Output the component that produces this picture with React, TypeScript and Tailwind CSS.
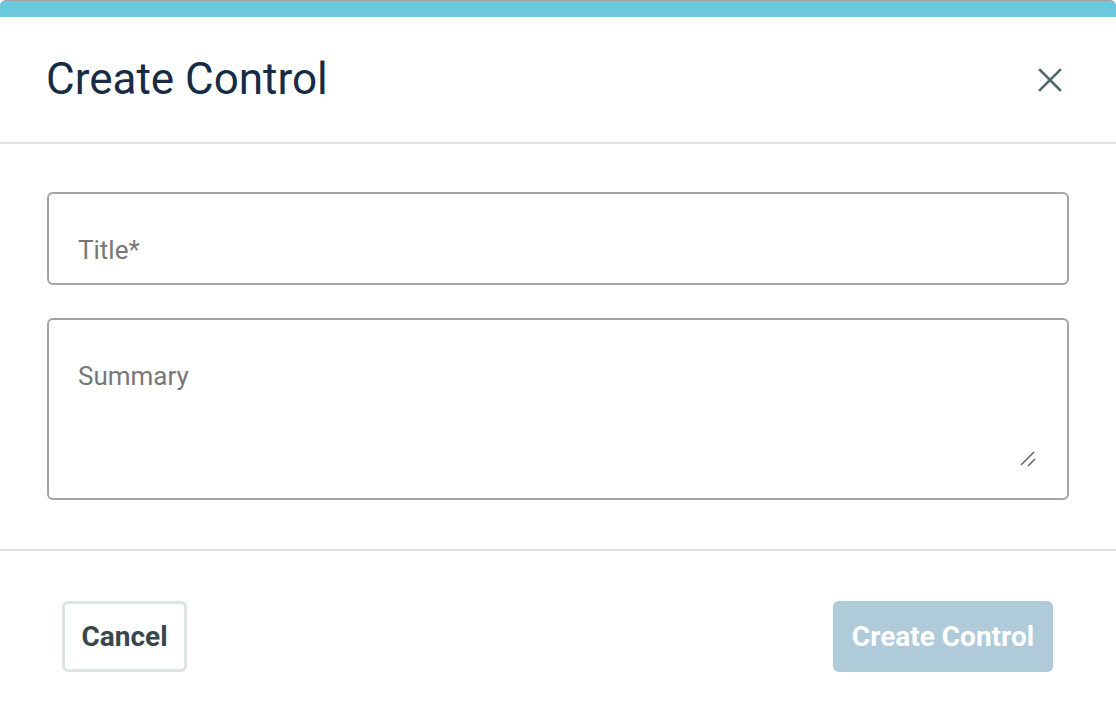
import React from "react";

export default function App() {
    return (
        <div className="w-[1116px] h-[718px] bg-white overflow-hidden font-['Roboto',sans-serif]">
            {/* Accent bar */}
            <div className="h-[17px] border-t border-[#a0a0a0] bg-[#6cc8dc] rounded-t-[6px]" />

            {/* Header */}
            <div className="h-[127px] flex items-center justify-between pl-[46px] pr-[52px] border-b-2 border-[#e2e2e2]">
                <h1 className="text-[44px] leading-none text-[#172b45] mt-[-1px]">Create Control</h1>
                <button className="w-[28px] h-[28px] flex items-center justify-center text-[#536868]">
                    <svg width="24" height="24" viewBox="0 0 24 24" fill="none" stroke="currentColor" strokeWidth="2.6" strokeLinecap="square">
                        <path d="M2 2 L22 22 M22 2 L2 22" />
                    </svg>
                </button>
            </div>

            {/* Body */}
            <div className="px-[47px] pt-[48px] pb-[49px] flex flex-col gap-[33px] border-b-2 border-[#e2e2e2]">
                <div className="h-[93px] border-2 border-[#a4a4a4] rounded-[6px] flex items-center px-[29px] pt-[30px] pb-[7px]">
                    <input
                        placeholder="Title*"
                        className="w-full outline-none text-[26px] text-[#333] placeholder:text-[#777] bg-transparent"
                    />
                </div>
                <div className="relative h-[182px] border-2 border-[#a4a4a4] rounded-[6px] px-[29px] pt-[40px]">
                    <textarea
                        placeholder="Summary"
                        className="w-full h-[110px] resize-none outline-none text-[26px] leading-[32px] text-[#333] placeholder:text-[#777] bg-transparent"
                    />
                    <svg className="absolute right-[30px] bottom-[30px]" width="18" height="18" viewBox="0 0 18 18" fill="none" stroke="#6a6a6a" strokeWidth="1.6">
                        <path d="M2 15 L15 2 M9 16 L16 9" />
                    </svg>
                </div>
            </div>

            {/* Footer */}
            <div className="flex items-center justify-between pl-[62px] pr-[63px] pt-[50px]">
                <button className="h-[71px] w-[125px] border-[3px] border-[#dce3e3] rounded-[6px] text-[28px] font-bold text-[#37474c]">
                    Cancel
                </button>
                <button className="h-[71px] w-[220px] bg-[#afcbd9] rounded-[6px] text-[28px] font-bold text-white">
                    Create Control
                </button>
            </div>
        </div>
    );
}
